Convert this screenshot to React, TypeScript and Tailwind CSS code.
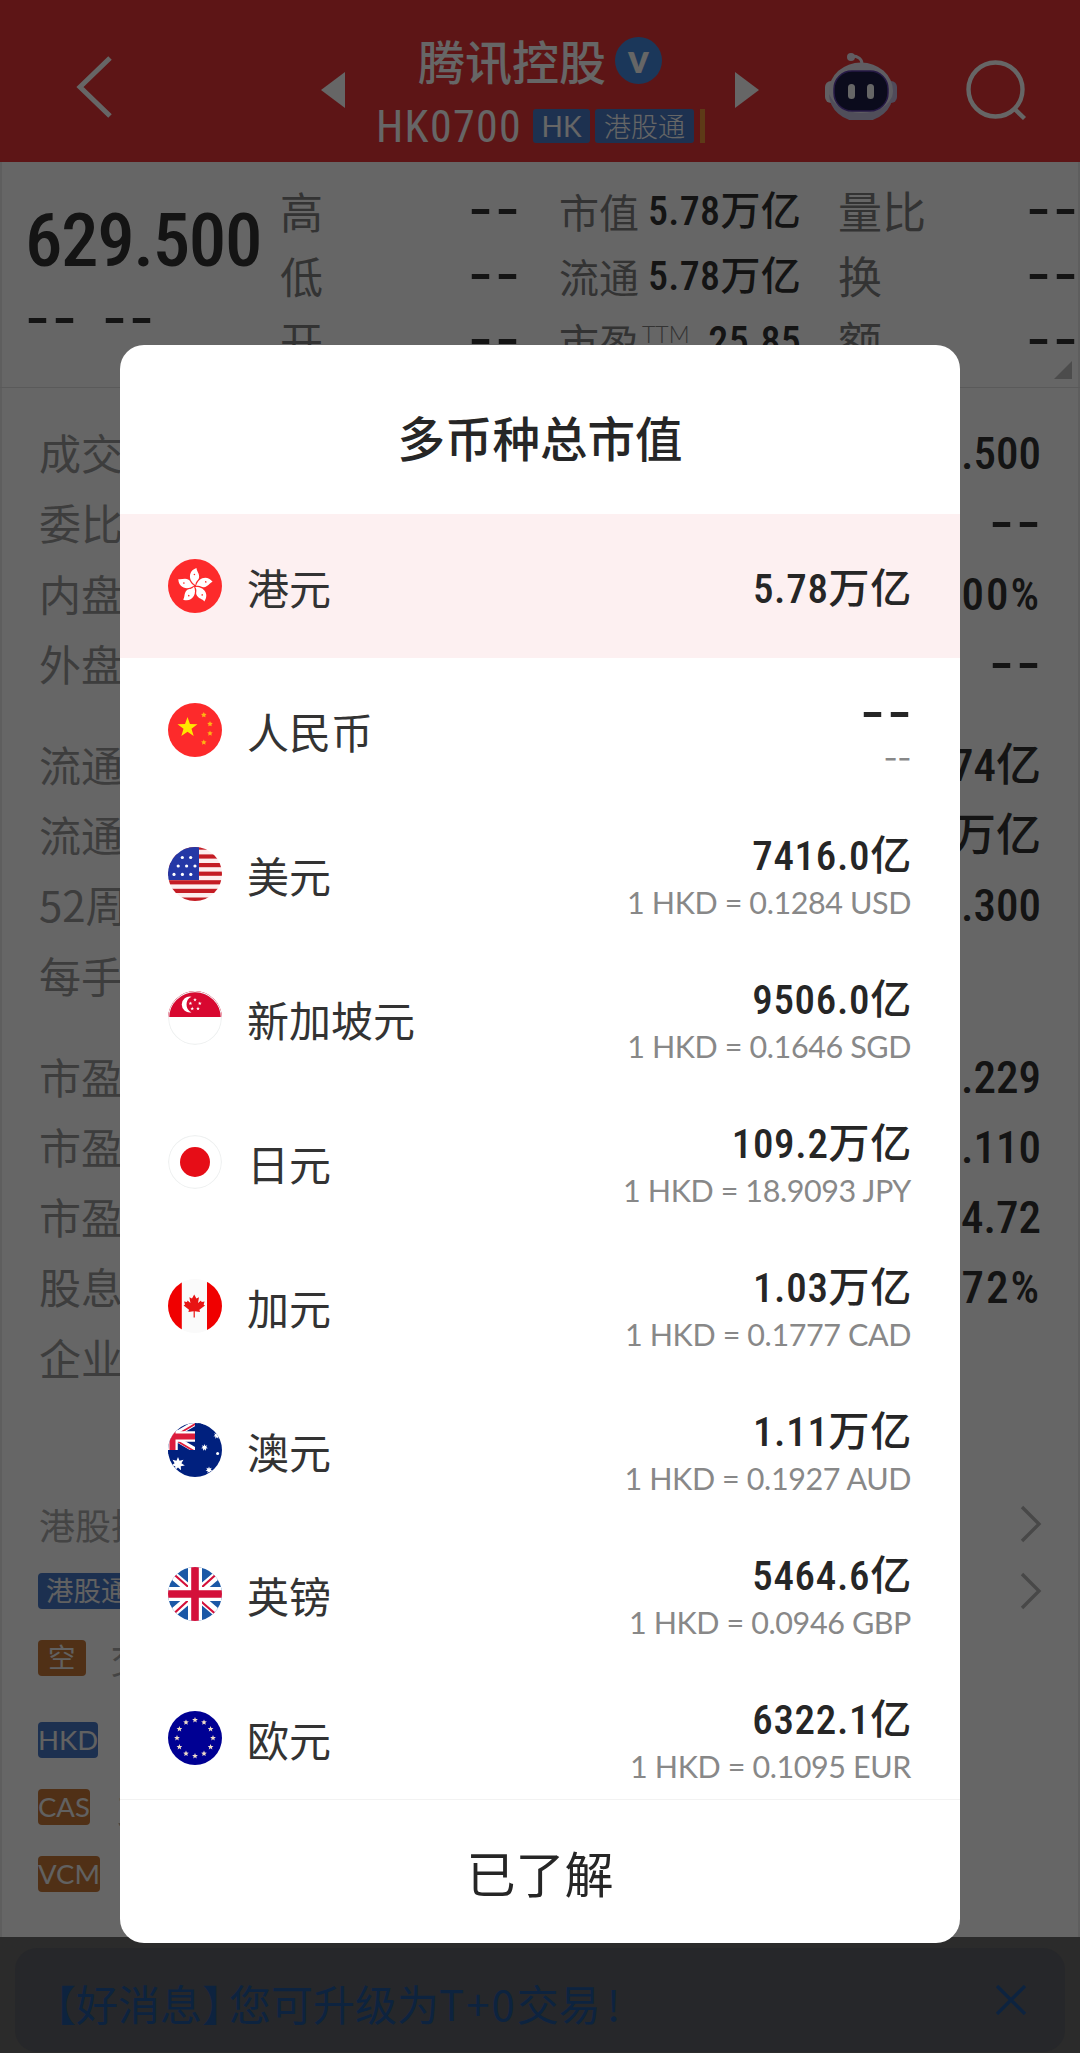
import type { ReactNode } from "react";

const CJK = "font-['Noto_Sans_CJK_SC',sans-serif]";
const NUM = "font-['Roboto','Noto_Sans_CJK_SC',sans-serif] font-stretch-[85%]";

function starPoints(cx: number, cy: number, r: number, spikes = 5, inner = 0.4) {
  return Array.from({ length: spikes * 2 }, (_, i) => {
    const radius = i % 2 ? r * inner : r;
    const a = (Math.PI * i) / spikes - Math.PI / 2;
    return `${(cx + radius * Math.cos(a)).toFixed(2)},${(cy + radius * Math.sin(a)).toFixed(2)}`;
  }).join(" ");
}

function Flag({ children, ring }: { children: ReactNode; ring?: boolean }) {
  return (
    <svg viewBox="0 0 54 54" className="size-[54px] shrink-0 rounded-full">
      {children}
      {ring ? (
        <circle cx="27" cy="27" r="26.4" fill="none" stroke="#eff1f1" strokeWidth="1.2" />
      ) : null}
    </svg>
  );
}

function HongKongFlag() {
  return (
    <Flag>
      <rect width="54" height="54" fill="#fd2a2b" />
      {[0, 72, 144, 216, 288].map((deg) => (
        <g key={deg} transform={`rotate(${deg} 27 27)`}>
          <path d="M27.5 26 C20.5 22 19.5 12 28.5 9 C28.5 12 32 15 31 19 C30.4 21.5 27.5 22 27.5 26Z" fill="#fff" />
          <circle cx="26.4" cy="15.5" r=".8" fill="#fd2a2b" />
        </g>
      ))}
    </Flag>
  );
}

function ChinaFlag() {
  return (
    <Flag>
      <rect width="54" height="54" fill="#fd2a2b" />
      <polygon points={starPoints(19.5, 24.5, 10.5)} fill="#ffe600" />
      {[[35.8, 12], [42, 21], [42, 30.3], [35.8, 39.3]].map(([x, y]) => (
        <polygon key={y} points={starPoints(x, y, 2.9, 5, 0.5)} fill="#fdb414" />
      ))}
    </Flag>
  );
}

function UsaFlag() {
  return (
    <Flag>
      <rect width="54" height="54" fill="#fdeeee" />
      {[-1.5, 7.4, 16, 24.6, 33.2, 41.8, 50.5].map((y) => (
        <rect key={y} y={y} width="54" height="4.2" fill="#c41c24" />
      ))}
      <rect width="31" height="33" fill="#2438a6" />
      {[[14.3, 10.5], [22.7, 10.5], [10.2, 19], [18.6, 19], [27, 19], [6, 27.4], [14.4, 27.4], [22.8, 27.4]].map(([x, y]) => (
        <circle key={`${x}-${y}`} cx={x} cy={y} r="1.6" fill="#fff" />
      ))}
    </Flag>
  );
}

function SingaporeFlag() {
  return (
    <Flag ring>
      <rect width="54" height="54" fill="#fff" />
      <rect width="54" height="26" fill="#d80830" />
      <path d="M23.5 5.8 A8 8 0 1 0 23.5 21.4 A8.6 8.6 0 0 1 23.5 5.8Z" fill="#fff" />
      {[[27, 8.8], [31.8, 12.4], [30, 17.6], [24.2, 17.6], [22.4, 12.4]].map(([x, y]) => (
        <polygon key={`${x}-${y}`} points={starPoints(x, y, 2)} fill="#fff" />
      ))}
    </Flag>
  );
}

function JapanFlag() {
  return (
    <Flag ring>
      <rect width="54" height="54" fill="#fff" />
      <circle cx="27" cy="27" r="15" fill="#e60d17" />
    </Flag>
  );
}

function CanadaFlag() {
  return (
    <Flag>
      <rect width="54" height="54" fill="#fafafa" />
      <rect width="13.8" height="54" fill="#f00000" />
      <rect x="39" width="15" height="54" fill="#f00000" />
      <path
        d="M26.2 15.5 L28.4 19.4 L31 18.2 L30 24 L33 21.5 L33.6 23 L36.6 22.6 L35.6 25.4 L37 26.4 L31.4 30.8 L32 33 L26.8 32.2 L26.8 38.5 L25.6 38.5 L25.6 32.2 L20.4 33 L21 30.8 L15.6 26.4 L17 25.4 L16 22.6 L19 23 L19.6 21.5 L22.4 24 L21.4 18.2 L24 19.4Z"
        fill="#e81414"
      />
    </Flag>
  );
}

function AustraliaFlag() {
  return (
    <Flag>
      <rect width="54" height="54" fill="#00207e" />
      <path d="M4 13.5 L29 -1 M4 13.5 L27 27" stroke="#fff" strokeWidth="5.4" />
      <path d="M6 13.5 L28 .5 M4 15 L26 28" stroke="#dc1c3c" strokeWidth="1.8" />
      <path d="M4.5 0 V27 M0 13.5 H27" stroke="#fff" strokeWidth="10.5" />
      <path d="M4.5 0 V27 M0 13.5 H27" stroke="#dc1c3c" strokeWidth="6" />
      <rect x="27" width="8" height="30" fill="#00207e" />
      <rect y="27" width="35" height="4" fill="#00207e" />
      <polygon points={starPoints(10, 41, 7, 7, 0.5)} fill="#fff" />
      {[[36.5, 24.5], [48.8, 12.5], [41, 47]].map(([x, y]) => (
        <polygon key={x} points={starPoints(x, y, 3.5, 7, 0.5)} fill="#fff" />
      ))}
      <circle cx="49.6" cy="30.4" r="1.5" fill="#fff" />
    </Flag>
  );
}

function BritainFlag() {
  return (
    <Flag>
      <rect width="54" height="54" fill="#1b58a6" />
      <path d="M0 4 L54 50 M54 4 L0 50" stroke="#fff" strokeWidth="8.4" />
      <path d="M5 6.5 L22 21.5 M33 21 L48 7.5 M20 33.5 L7 45.5 M32 33.5 L47 46.5" stroke="#d4103a" strokeWidth="2.2" />
      <path d="M27 0 V54 M0 27 H54" stroke="#fff" strokeWidth="14" />
      <path d="M27 0 V54 M0 27 H54" stroke="#d4103a" strokeWidth="7.6" />
    </Flag>
  );
}

function EuroFlag() {
  return (
    <Flag>
      <rect width="54" height="54" fill="#000093" />
      {Array.from({ length: 12 }, (_, i) => {
        const a = (Math.PI * i) / 6;
        return (
          <polygon key={i} points={starPoints(27 + 18 * Math.cos(a), 27 + 18 * Math.sin(a), 3, 5, 0.45)} fill="#f0dcc8" />
        );
      })}
    </Flag>
  );
}

function Dashes({ small = false }: { small?: boolean }) {
  return small ? (
    <span className="font-['Inter',sans-serif] text-[31px] tracking-[-0.5px] whitespace-nowrap">--</span>
  ) : (
    <span className="-mr-[2px] font-['Inter',sans-serif] text-[54px] font-medium tracking-[2px] whitespace-nowrap">--</span>
  );
}

const CURRENCIES = [
  { name: "港元", value: "5.78万亿", flag: <HongKongFlag />, active: true },
  { name: "人民币", value: "--", rate: "--", flag: <ChinaFlag /> },
  { name: "美元", value: "7416.0亿", rate: "1 HKD = 0.1284 USD", flag: <UsaFlag /> },
  { name: "新加坡元", value: "9506.0亿", rate: "1 HKD = 0.1646 SGD", flag: <SingaporeFlag /> },
  { name: "日元", value: "109.2万亿", rate: "1 HKD = 18.9093 JPY", flag: <JapanFlag /> },
  { name: "加元", value: "1.03万亿", rate: "1 HKD = 0.1777 CAD", flag: <CanadaFlag /> },
  { name: "澳元", value: "1.11万亿", rate: "1 HKD = 0.1927 AUD", flag: <AustraliaFlag /> },
  { name: "英镑", value: "5464.6亿", rate: "1 HKD = 0.0946 GBP", flag: <BritainFlag /> },
  { name: "欧元", value: "6322.1亿", rate: "1 HKD = 0.1095 EUR", flag: <EuroFlag /> },
];

const DETAIL_GROUPS = [
  [
    ["成交", "2.500"],
    ["委比", "--"],
    ["内盘", "0.00%"],
    ["外盘", "--"],
  ],
  [
    ["流通", "74亿"],
    ["流通", "8万亿"],
    ["52周", "4.300"],
    ["每手", ""],
  ],
  [
    ["市盈", "7.229"],
    ["市盈", "2.110"],
    ["市盈", "4.72"],
    ["股息", "0.72%"],
    ["企业", ""],
  ],
];

function CurrencyRow({ name, value, rate, flag, active }: (typeof CURRENCIES)[number]) {
  return (
    <li
      className={`flex h-36 shrink-0 items-center pr-[48px] pl-12 ${active ? "bg-[#fdf0f1]" : ""}`}
    >
      {flag}
      <span className={`${CJK} ml-[25px] pt-[2px] text-[42px] leading-[60px] text-[#333]`}>{name}</span>
      <div className="ml-auto flex flex-col items-end pt-[6px]">
        <span className={`${NUM} flex h-[50px] items-center text-[41px] leading-[50px] font-medium tracking-[0.7px] text-[#262626]`}>
          {value === "--" ? <Dashes /> : value}
        </span>
        {rate ? (
          <span className="mr-[1px] flex h-[42px] items-center font-['Lato',sans-serif] text-[30.5px] leading-[42px] tracking-[-0.4px] text-[#888]">
            {rate === "--" ? <Dashes small /> : rate}
          </span>
        ) : null}
      </div>
    </li>
  );
}

function MarketCapDialog() {
  return (
    <div className="flex h-[1598px] w-[840px] flex-col overflow-hidden rounded-[24px] bg-white">
      <h2 className={`${CJK} h-[169px] shrink-0 pt-[57px] text-center text-[47.5px] leading-[70px] font-medium text-[#262626]`}>
        多币种总市值
      </h2>
      <ul className="flex h-[1285px] flex-col overflow-hidden">
        {CURRENCIES.map((c) => (
          <CurrencyRow key={c.name} {...c} />
        ))}
      </ul>
      <button type="button" className={`${CJK} h-36 border-t border-[#f2f2f2] text-[49px] text-[#262626]`}>
        已了解
      </button>
    </div>
  );
}

function RobotIcon() {
  return (
    <svg viewBox="0 0 72 68" className="h-[68px] w-[72px]">
      <path d="M27 4 C33 4 37 7 37 12" fill="none" stroke="#f2e8f4" strokeWidth="3" />
      <circle cx="26" cy="5" r="4" fill="#f2e8f4" />
      <rect y="29" width="12" height="22" rx="6" fill="#f5f0f8" />
      <rect x="60" y="29" width="12" height="22" rx="6" fill="#c8bce0" />
      <ellipse cx="36" cy="39" rx="32" ry="28.5" fill="#ede8f5" />
      <path d="M4 42 A32 28 0 0 0 68 42 Q62 60 36 61 Q12 60 4 42Z" fill="#c9c2e0" />
      <rect x="9" y="19" width="54" height="40" rx="18" fill="#1d1c48" stroke="#5f3fae" strokeWidth="1.5" />
      <rect x="23" y="32" width="7" height="15" rx="3.5" fill="#fff" />
      <rect x="42" y="32" width="7" height="15" rx="3.5" fill="#fff" />
    </svg>
  );
}

function Header() {
  return (
    <header className="flex h-[162px] bg-[#e93538] text-white">
      <div className="w-[321px] shrink-0 pt-[55px] pl-[74px]">
        <svg viewBox="0 0 40 64" className="h-16 w-10" fill="none" stroke="currentColor" strokeWidth="5">
          <path d="M36 3 L6 32 L36 61" />
        </svg>
      </div>
      <svg viewBox="0 0 24 36" className="mt-[72px] h-9 w-6 shrink-0" fill="currentColor">
        <path d="M0 18 L24 0 V36Z" />
      </svg>
      <div className="ml-[30px] flex w-[331px] flex-col">
        <div className="mt-[25px] flex h-[70px] items-center">
          <span className={`${CJK} ml-[43px] text-[47px] leading-[70px] font-medium`}>腾讯控股</span>
          <span className="ml-[9px] flex size-[47px] items-center justify-center rounded-full bg-[#448be0] pb-1 font-['Lato',sans-serif] text-[40px] leading-none font-black">
            v
          </span>
        </div>
        <div className="mt-[9px] flex h-[44px] items-center">
          <span className={`${NUM} w-[158px] shrink-0 pt-[1px] pl-[1px] text-[44px] leading-[46px] tracking-[1.3px]`}>
            HK0700
          </span>
          <span className="flex h-[34px] w-[57px] items-center justify-center rounded-[3px] bg-[#4a7cc8] font-['Lato',sans-serif] text-[28px]">
            HK
          </span>
          <span className={`${CJK} ml-[5px] flex h-[34px] w-[99px] items-center justify-center rounded-[3px] bg-[#4a7cc8] text-[27px] leading-[34px] font-light`}>
            港股通
          </span>
          <span className="ml-[6px] h-[34px] w-[5px] bg-[#e8913a]" />
        </div>
      </div>
      <svg viewBox="0 0 24 36" className="mt-[72px] ml-[29px] h-9 w-6 shrink-0" fill="currentColor">
        <path d="M24 18 L0 0 V36Z" />
      </svg>
      <div className="mt-[52px] ml-[66px]">
        <RobotIcon />
      </div>
      <svg viewBox="0 0 60 62" className="mt-[60px] ml-[69px] h-[62px] w-[60px]" fill="none" stroke="currentColor" strokeWidth="4.4">
        <circle cx="29.5" cy="29.5" r="27" />
        <path d="M47.5 48 L58.5 58.5" />
      </svg>
    </header>
  );
}

function QuoteSummary() {
  return (
    <section className="flex h-[226px] border-b border-[#e0e0e0] text-[#333]">
      <div className="w-[280px] shrink-0 pl-[25px]">
        <p className={`${NUM} mt-[34px] text-[75px] leading-[88px] font-medium tracking-[-1.4px]`}>629.500</p>
        <p className="mt-[6px] flex gap-[25px] leading-[56px]">
          <Dashes />
          <Dashes />
        </p>
      </div>
      <div className="flex w-[240px] shrink-0 flex-col pt-[16px]">
        {["高", "低", "开"].map((label) => (
          <div key={label} className="flex h-[65px] items-center justify-between">
            <span className={`${CJK} text-[43px] leading-[65px] text-[#808080]`}>{label}</span>
            <span className="pb-[4px]">
              <Dashes />
            </span>
          </div>
        ))}
      </div>
      <div className="ml-[39px] flex w-[242px] shrink-0 flex-col pt-[17px]">
        {[
          ["市值", "5.78万亿"],
          ["流通", "5.78万亿"],
          ["市盈", "25.85"],
        ].map(([label, value]) => (
          <div key={label} className="flex h-[65px] items-center justify-between">
            <span className={`${CJK} flex text-[40px] leading-[65px] text-[#808080]`}>
              {label}
              {label === "市盈" ? (
                <span className="ml-[3px] pt-[5px] font-['Lato',sans-serif] text-[23px] leading-[40px] font-light">TTM</span>
              ) : null}
            </span>
            <span className={`${NUM} text-[40px] leading-[65px] font-medium tracking-[0.3px]`}>{value}</span>
          </div>
        ))}
      </div>
      <div className="ml-[37px] flex w-[240px] shrink-0 flex-col pt-[16px]">
        {["量比", "换", "额"].map((label) => (
          <div key={label} className="flex h-[65px] items-center justify-between">
            <span className={`${CJK} text-[44px] leading-[65px] text-[#808080]`}>{label}</span>
            <span className="pb-[4px]">
              <Dashes />
            </span>
          </div>
        ))}
        <svg viewBox="0 0 18 18" className="-mt-[12px] mr-[6px] size-[18px] shrink-0 self-end" fill="#bdbdbd">
          <path d="M18 0 V18 H0Z" />
        </svg>
      </div>
    </section>
  );
}

function ChevronRight() {
  return (
    <svg viewBox="0 0 22 38" className="ml-auto h-[38px] w-[22px]" fill="none" stroke="#b5b5b5" strokeWidth="3.4">
      <path d="M2 2 L19 19 L2 36" />
    </svg>
  );
}

function Tag({ color, children }: { color: "blue" | "orange"; children: ReactNode }) {
  return (
    <span
      className={`font-['Lato','Noto_Sans_CJK_SC',sans-serif] flex h-9 items-center rounded-[4px] text-[27.5px] leading-9 whitespace-nowrap text-[#f2f2f2] ${
        color === "blue" ? "bg-[#4878c8]" : "bg-[#c87838]"
      }`}
    >
      {children}
    </span>
  );
}

function DetailList() {
  return (
    <section className="pt-[31px] pr-[39px] pl-[39px]">
      {DETAIL_GROUPS.map((group, g) => (
        <div key={g} className="mb-[30.5px]">
          {group.map(([label, value], i) => (
            <div key={i} className="flex h-[70.3px] items-center justify-between">
              <span className={`${CJK} pb-[5px] text-[42px] leading-[65px] text-[#999]`}>{label}</span>
              <span
                className={`${NUM} text-[45px] leading-[70px] font-medium text-[#333] ${
                  value.endsWith("%") ? "tracking-[2px]" : ""
                }`}
              >
                {value === "--" ? <Dashes /> : value}
              </span>
            </div>
          ))}
        </div>
      ))}
    </section>
  );
}

function MarketNotes() {
  return (
    <section className={`${CJK} flex flex-col pr-[38px] pl-[38px] text-[36px] leading-9 text-[#aaa]`}>
      <div className="flex h-[66px] items-center">
        <span className="pl-[1px]">港股披露</span>
        <ChevronRight />
      </div>
      <div className="flex h-[67px] items-center">
        <Tag color="blue">
          <span className="px-[8px]">港股通</span>
        </Tag>
        <ChevronRight />
      </div>
      <div className="flex h-[67px] items-center gap-[25px]">
        <Tag color="orange">
          <span className="px-[10px]">空</span>
        </Tag>
        <span>交易</span>
      </div>
      <div className="mt-[15px] flex h-[67px] items-center">
        <Tag color="blue">HKD</Tag>
      </div>
      <div className="flex h-[67px] items-center gap-[27px]">
        <Tag color="orange">CAS</Tag>
        <span>支持</span>
      </div>
      <div className="flex h-[67px] items-center gap-[25px]">
        <Tag color="orange">VCM</Tag>
      </div>
    </section>
  );
}

function UpgradeBanner() {
  return (
    <footer className="h-[116px] bg-[#6b6b6b] px-[15px] pt-[11px]">
      <div className="flex h-[104px] items-center rounded-[22px] bg-[#5f6269] pr-[39px] pl-[19px] text-[#22599f]">
        <p className={`${CJK} pt-[5px] text-[42px] leading-[60px]`}>
          【好消息<span className="-mr-[15px]">】</span>您可升级为<span className="tracking-[2px]">T+0</span>交易
          <span className="ml-[6px]">!</span>
        </p>
        <svg viewBox="0 0 30 30" className="ml-auto size-[30px]" fill="none" stroke="currentColor" strokeWidth="3.4">
          <path d="M1 1 L29 29 M29 1 L1 29" />
        </svg>
      </div>
    </footer>
  );
}

export default function App() {
  return (
    <div className="relative h-[2053px] w-[1080px] overflow-hidden bg-white">
      <div className="flex h-full flex-col">
        <Header />
        <main className="h-[1775px] shrink-0 overflow-hidden shadow-[inset_2px_0_#ececec,inset_-2px_0_#ececec]">
          <QuoteSummary />
          <DetailList />
          <div className="pt-[67px]">
            <MarketNotes />
          </div>
        </main>
        <UpgradeBanner />
      </div>
      <div className="absolute inset-0 flex items-start justify-center bg-black/60 pt-[345px]">
        <MarketCapDialog />
      </div>
    </div>
  );
}
